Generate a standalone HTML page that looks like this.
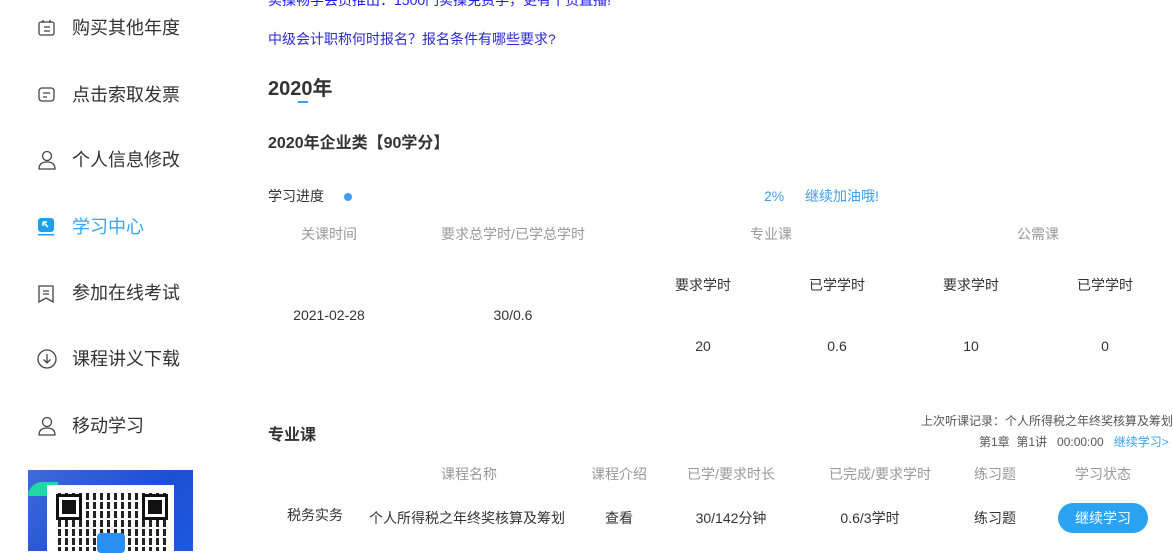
<!DOCTYPE html>
<html><head><meta charset="utf-8"><style>
body{margin:0;width:1173px;height:551px;overflow:hidden;background:#fff;font-family:"Liberation Sans","Noto Sans CJK SC",sans-serif;color:#333;position:relative}
.a{position:absolute;white-space:nowrap;line-height:1}
.nav{font-size:18px;color:#333;left:72px}
.ic{position:absolute;left:37px}
.c{transform:translateX(-50%)}
.g{color:#999;font-size:14px}
.t{font-size:14px;color:#333}
</style></head><body>
<!-- sidebar -->
<svg class="ic" style="top:19px" width="20" height="18" viewBox="0 0 20 18" fill="none" stroke="#444" stroke-width="1.3"><rect x="2" y="3" width="15" height="13" rx="2"/><path d="M6 1v3M13 1v3M7 8h6M7 12h6"/></svg>
<div class="a nav" style="top:19px">购买其他年度</div>
<svg class="ic" style="top:86px" width="20" height="18" viewBox="0 0 20 18" fill="none" stroke="#444" stroke-width="1.3"><rect x="2" y="2" width="15" height="13" rx="3"/><path d="M6 7h7M6 11h4"/></svg>
<div class="a nav" style="top:86px">点击索取发票</div>
<svg class="ic" style="top:150px" width="20" height="20" viewBox="0 0 20 20" fill="none" stroke="#444" stroke-width="1.3"><circle cx="10" cy="6" r="4.5"/><path d="M2 19c0-5 3-7 8-7s8 2 8 7z"/></svg>
<div class="a nav" style="top:151px">个人信息修改</div>
<svg class="ic" style="top:217px" width="20" height="20" viewBox="0 0 20 20"><rect x="1" y="1" width="16" height="14" rx="3" fill="#1ea0f0"/><path d="M6 5l5 5M6 5v4M6 5h4" stroke="#fff" stroke-width="1.5" fill="none"/><rect x="1" y="17" width="16" height="1.5" fill="#1ea0f0"/></svg>
<div class="a nav" style="top:218px;color:#3aa3f0">学习中心</div>
<svg class="ic" style="top:284px" width="20" height="20" viewBox="0 0 20 20" fill="none" stroke="#444" stroke-width="1.3"><path d="M2 2h14v16l-7-4-7 4z"/><path d="M6 7h6M6 10h6"/></svg>
<div class="a nav" style="top:284px">参加在线考试</div>
<svg class="ic" style="top:349px" width="21" height="21" viewBox="0 0 21 21" fill="none" stroke="#444" stroke-width="1.3"><circle cx="10" cy="10" r="9"/><path d="M10 5v9M6.5 10.5l3.5 3.5 3.5-3.5"/></svg>
<div class="a nav" style="top:350px">课程讲义下载</div>
<svg class="ic" style="top:416px" width="20" height="20" viewBox="0 0 20 20" fill="none" stroke="#444" stroke-width="1.3"><circle cx="10" cy="6" r="4.5"/><path d="M2 19c0-5 3-7 8-7s8 2 8 7z"/></svg>
<div class="a nav" style="top:417px">移动学习</div>
<div class="a" style="left:28px;top:470px;width:165px;height:81px;background:linear-gradient(135deg,#3f6ad8,#1d4fd6 60%,#1a5be0)"></div>
<div class="a" style="left:28px;top:482px;width:30px;height:14px;background:#1ed9a5;border-radius:20px 0 0 0"></div>
<div class="a" style="left:47px;top:485px;width:127px;height:66px;background:#fff"></div>
<div class="a" style="left:54px;top:492px;width:113px;height:59px;background:repeating-linear-gradient(90deg,#fff 0 4px,transparent 4px 7px),repeating-linear-gradient(0deg,#222 0 4px,#fff 4px 6px,#222 6px 9px)"></div>
<div class="a" style="left:56px;top:494px;width:20px;height:20px;border:3px solid #111;background:#fff;box-shadow:inset 0 0 0 3px #fff,inset 0 0 0 10px #111"></div>
<div class="a" style="left:142px;top:494px;width:20px;height:20px;border:3px solid #111;background:#fff;box-shadow:inset 0 0 0 3px #fff,inset 0 0 0 10px #111"></div>
<div class="a" style="left:97px;top:533px;width:28px;height:20px;background:#2a8ff0;border-radius:4px"></div>
<!-- main -->
<div class="a" style="left:268px;top:-7px;font-size:14px;color:#1a1aee">实操畅学会员推出：1500门实操免费学，更有干货直播!</div>
<div class="a" style="left:268px;top:32px;font-size:14px;color:#2a2ad0">中级会计职称何时报名？报名条件有哪些要求?</div>
<div class="a" style="left:268px;top:79px;font-size:20px;font-weight:bold;color:#333">2020年</div>
<div class="a" style="left:298px;top:101px;width:10px;height:2px;background:#3a9ff0"></div>
<div class="a" style="left:268px;top:136px;font-size:16px;font-weight:bold;color:#333">2020年企业类【90学分】</div>
<div class="a t" style="left:268px;top:189px">学习进度</div>
<div class="a" style="left:344px;top:193px;width:8px;height:8px;border-radius:50%;background:#3a9ff0"></div>
<div class="a" style="left:764px;top:189px;font-size:14px;color:#3a9ff0">2%</div>
<div class="a" style="left:805px;top:189px;font-size:14px;color:#3a9ff0">继续加油哦!</div>
<div class="a g c" style="left:329px;top:227px">关课时间</div>
<div class="a g c" style="left:513px;top:227px">要求总学时/已学总学时</div>
<div class="a g c" style="left:771px;top:227px">专业课</div>
<div class="a g c" style="left:1038px;top:227px">公需课</div>
<div class="a t c" style="left:703px;top:278px">要求学时</div>
<div class="a t c" style="left:837px;top:278px">已学学时</div>
<div class="a t c" style="left:971px;top:278px">要求学时</div>
<div class="a t c" style="left:1105px;top:278px">已学学时</div>
<div class="a t c" style="left:329px;top:308px">2021-02-28</div>
<div class="a t c" style="left:513px;top:308px">30/0.6</div>
<div class="a t c" style="left:703px;top:339px">20</div>
<div class="a t c" style="left:837px;top:339px">0.6</div>
<div class="a t c" style="left:971px;top:339px">10</div>
<div class="a t c" style="left:1105px;top:339px">0</div>
<div class="a" style="left:268px;top:428px;font-size:16px;font-weight:bold;color:#333">专业课</div>
<div class="a" style="left:921px;top:415px;font-size:12px;color:#555">上次听课记录：个人所得税之年终奖核算及筹划</div>
<div class="a" style="left:979px;top:436px;font-size:12px;color:#555">第1章&nbsp;&nbsp;第1讲&nbsp;&nbsp;&nbsp;00:00:00&nbsp;&nbsp;&nbsp;<span style="color:#3a9ff0">继续学习&gt;</span></div>
<div class="a g c" style="left:469px;top:467px">课程名称</div>
<div class="a g c" style="left:619px;top:467px">课程介绍</div>
<div class="a g c" style="left:731px;top:467px">已学/要求时长</div>
<div class="a g c" style="left:880px;top:467px">已完成/要求学时</div>
<div class="a g c" style="left:995px;top:467px">练习题</div>
<div class="a g c" style="left:1103px;top:467px">学习状态</div>
<div class="a t c" style="left:315px;top:508px">税务实务</div>
<div class="a t c" style="left:467px;top:511px">个人所得税之年终奖核算及筹划</div>
<div class="a t c" style="left:619px;top:511px">查看</div>
<div class="a t c" style="left:731px;top:511px">30/142分钟</div>
<div class="a t c" style="left:870px;top:511px">0.6/3学时</div>
<div class="a t c" style="left:995px;top:511px">练习题</div>
<div class="a" style="left:1058px;top:503px;width:90px;height:30px;border-radius:15px;background:#2aa3f2;color:#fff;font-size:14px;line-height:30px;text-align:center">继续学习</div>
</body></html>
